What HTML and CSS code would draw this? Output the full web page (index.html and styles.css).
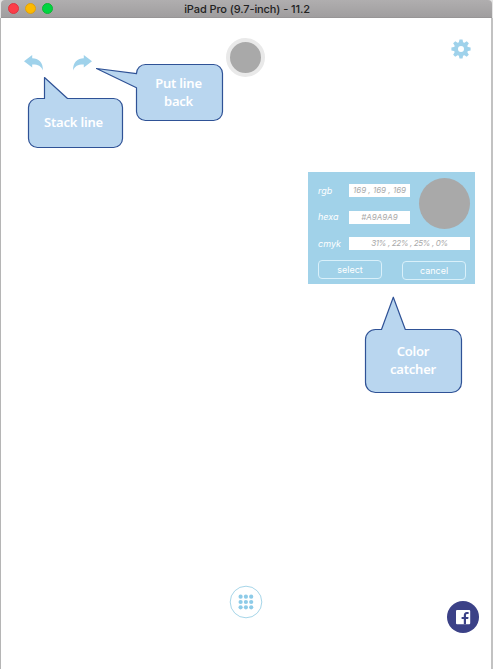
FILE: index.html
```html
<!DOCTYPE html>
<html lang="en">
<head>
<meta charset="utf-8">
<title>iPad Pro (9.7-inch) - 11.2</title>
<link rel="stylesheet" href="styles.css">
</head>
<body>
<div class="window">
  <header class="titlebar">
    <div class="lights"><i class="light close"></i><i class="light minimize"></i><i class="light expand"></i></div>
    <span class="title">iPad Pro (9.7-inch) - 11.2</span>
  </header>
  <main class="screen">
    <nav class="toolbar">
      <div class="history">
        <svg class="arrow" viewBox="0 0 20 16"><path d="M0 6.200 8.200 0V3.200C14.500 3.200 19.200 7 18.900 15.500 17.200 10.800 13.500 9.300 8.200 9.500V12.500z"/></svg>
        <svg class="arrow flip" viewBox="0 0 20 16"><path d="M0 6.200 8.200 0V3.200C14.500 3.200 19.200 7 18.900 15.500 17.200 10.800 13.500 9.300 8.200 9.500V12.500z"/></svg>
      </div>
      <div class="current-color"></div>
      <svg class="gear" viewBox="-10 -10 20 20">
        <g class="teeth">
          <path id="tooth" d="M-2.300-6-1.500-9.600h3L2.300-6V6L1.500 9.600h-3L-2.300 6z"/>
          <use href="#tooth" transform="rotate(45)"/>
          <use href="#tooth" transform="rotate(90)"/>
          <use href="#tooth" transform="rotate(135)"/>
          <circle r="7"/>
        </g>
        <circle class="hole" r="3"/>
      </svg>
    </nav>

    <section class="catcher">
      <div class="values">
        <span class="label">rgb</span><span class="value">169 , 169 , 169</span>
        <div class="swatch"></div>
        <span class="label">hexa</span><span class="value">#A9A9A9</span>
        <span class="label">cmyk</span><span class="value wide">31% , 22% , 25% , 0%</span>
      </div>
      <div class="actions"><button class="select">select</button><button class="cancel">cancel</button></div>
    </section>

    <footer class="bottom">
      <svg class="palette" viewBox="0 0 34 34">
        <circle class="ring" cx="17" cy="17" r="15.800"/>
        <g class="dots">
          <circle cx="11.600" cy="11.700" r="2.100"/><circle cx="16.900" cy="11.700" r="2.100"/><circle cx="22.200" cy="11.700" r="2.100"/>
          <circle cx="11.600" cy="17" r="2.100"/><circle cx="16.900" cy="17" r="2.100"/><circle cx="22.200" cy="17" r="2.100"/>
          <circle cx="11.600" cy="22.300" r="2.100"/><circle cx="16.900" cy="22.300" r="2.100"/><circle cx="22.200" cy="22.300" r="2.100"/>
        </g>
      </svg>
      <svg class="facebook" viewBox="0 0 32 32">
        <circle class="disc" cx="16" cy="16" r="16"/>
        <rect class="tile" x="9" y="9" width="14.200" height="14.300" rx="1"/>
        <path class="mark" d="M16.800 23.300V18h-2.200v-2h2.200v-1.400c0-2.300 1.200-3.500 3-3.500h1.800v2h-1.300c-.9 0-1.300.5-1.300 1.400V16h2.500l-.3 2H19v5.300z"/>
      </svg>
    </footer>
  </main>

  <div class="callout stack">
    <svg viewBox="0 0 98 74"><path d="M17.500 23.500V2.500L40.500 23.500H86.500a9 9 0 0 1 9 9V63.500a9 9 0 0 1-9 9H10.500a9 9 0 0 1-9-9V32.500a9 9 0 0 1 9-9z"/></svg>
    <p>Stack line</p>
  </div>
  <div class="callout put">
    <svg viewBox="0 0 130 60"><path d="M41.500 10.700 1.500 5.500 41.500 24.800V48.500a9 9 0 0 0 9 9H118.500a9 9 0 0 0 9-9V10.500a9 9 0 0 0-9-9H50.500a9 9 0 0 0-9 9z"/></svg>
    <p>Put line<br>back</p>
  </div>
  <div class="callout color">
    <svg viewBox="0 0 100 100"><path d="M17.500 34.500 29.300 2.200 41.300 34.500H87.500a10 10 0 0 1 10 10V87.500a10 10 0 0 1-10 10H11.500a10 10 0 0 1-10-10V44.500a10 10 0 0 1 10-10z"/></svg>
    <p>Color<br>catcher</p>
  </div>
</div>
</body>
</html>
```

FILE: styles.css
```css
* { box-sizing: border-box; }

body {
  margin: 0;
  background: #e4e4e4;
  font-family: Inter, "Liberation Sans", sans-serif;
}

.window {
  position: relative;
  height: 669px;
  overflow: hidden;
}

.titlebar {
  display: grid;
  grid-template-columns: 1fr auto 1fr;
  align-items: center;
  height: 18px;
  margin: 0 1px;
  padding-bottom: 1px;
  border-bottom: 1px solid #979596;
  border-radius: 4px 4px 0 0;
  background: linear-gradient(#b0aeaf, #a09e9f);
}

.lights { display: flex; gap: 6px; padding-left: 6.500px; }
.light { width: 11px; height: 11px; border-radius: 50%; }
.close { background: #fc3d48; border: 1px solid #df3440; }
.minimize { background: #fdb900; border: 1px solid #dda010; }
.expand { background: #00d541; border: 1px solid #10b535; }

.title {
  padding: 1px 0 0 1px;
  font: 500 11px/16px Inter, sans-serif;
  letter-spacing: -0.1px;
  color: #222;
}

.screen {
  display: flex;
  flex-direction: column;
  height: 651px;
  border-left: 1px solid #b5b5b5;
  border-right: 2px solid #c2c2c2;
  background: #fff;
}

.toolbar {
  display: grid;
  grid-template-columns: 1fr 40px 1fr;
  padding: 20px 20px 0 23px;
  height: 154px;
}

.history { display: flex; gap: 29px; padding-top: 17px; }
.arrow { width: 20px; height: 16px; fill: #9fd2eb; }
.flip { transform: scaleX(-1); margin-left: -1px; }

.current-color {
  width: 39px;
  height: 39px;
  margin-left: -1.500px;
  border: 4px solid #e9e9e9;
  border-radius: 50%;
  background: #a9a9a9;
}

.gear { justify-self: end; width: 20px; height: 20px; margin-top: 1px; }
.teeth { fill: #9fd2eb; }
.hole { fill: #fff; }

.catcher {
  width: 167px;
  height: 112px;
  margin-left: 307px;
  padding: 6px 5px 0 10px;
  background: #a1d2e9;
  color: #fff;
}

.values {
  display: grid;
  grid-template-columns: 31px 61px 60px;
  grid-template-rows: 25px 28px 25px;
  align-items: center;
}

.label { padding-bottom: 1px; font-size: 9px; font-style: italic; }

.value {
  height: 13px;
  background: #fff;
  color: #a9a9a9;
  font-size: 8px;
  font-style: italic;
  line-height: 13px;
  text-align: center;
  white-space: nowrap;
}

.wide { grid-column: 2 / 4; letter-spacing: -0.4px; }

.swatch {
  grid-column: 3;
  grid-row: 1 / 3;
  align-self: start;
  justify-self: end;
  width: 51px;
  height: 51px;
  border-radius: 50%;
  background: #a9a9a9;
}

.actions { display: flex; gap: 20px; margin-top: 4px; }

button {
  width: 64px;
  height: 19px;
  padding: 0;
  border: 1px solid #d9f0fa;
  border-radius: 4px;
  background: none;
  color: #fff;
  font: 9px/17px Inter, sans-serif;
}

.cancel { margin-top: 1px; }

.bottom {
  display: grid;
  grid-template-columns: 1fr 34px 1fr;
  margin-top: auto;
  padding: 0 12px 0 12px;
  height: 84px;
}

.palette { grid-column: 2; width: 34px; height: 34px; }
.ring { fill: #fff; stroke: #a7d6e9; stroke-width: 1; }
.dots { fill: #8dcbe8; }
.facebook { justify-self: end; width: 32px; height: 32px; margin-top: 16px; }
.disc, .mark { fill: #3b4187; }
.tile { fill: #fff; }

.callout { position: absolute; }
.callout svg { display: block; width: 100%; height: 100%; fill: #b9d6ef; stroke: #2f5296; stroke-width: 1.2; stroke-linejoin: round; }

.callout p {
  position: absolute;
  left: 0;
  right: 0;
  margin: 0;
  color: #fff;
  font: 600 13px/18px "Noto Sans", "Open Sans", sans-serif;
  letter-spacing: -0.2px;
  text-align: center;
}

.stack { left: 27px; top: 75px; width: 98px; height: 74px; }
.stack p { top: 38px; right: 5px; }
.put { left: 95px; top: 63px; width: 130px; height: 60px; }
.put p { top: 11px; left: 37px; }
.color { left: 364px; top: 295px; width: 100px; height: 100px; }
.color p { top: 47px; right: 2px; }
```
